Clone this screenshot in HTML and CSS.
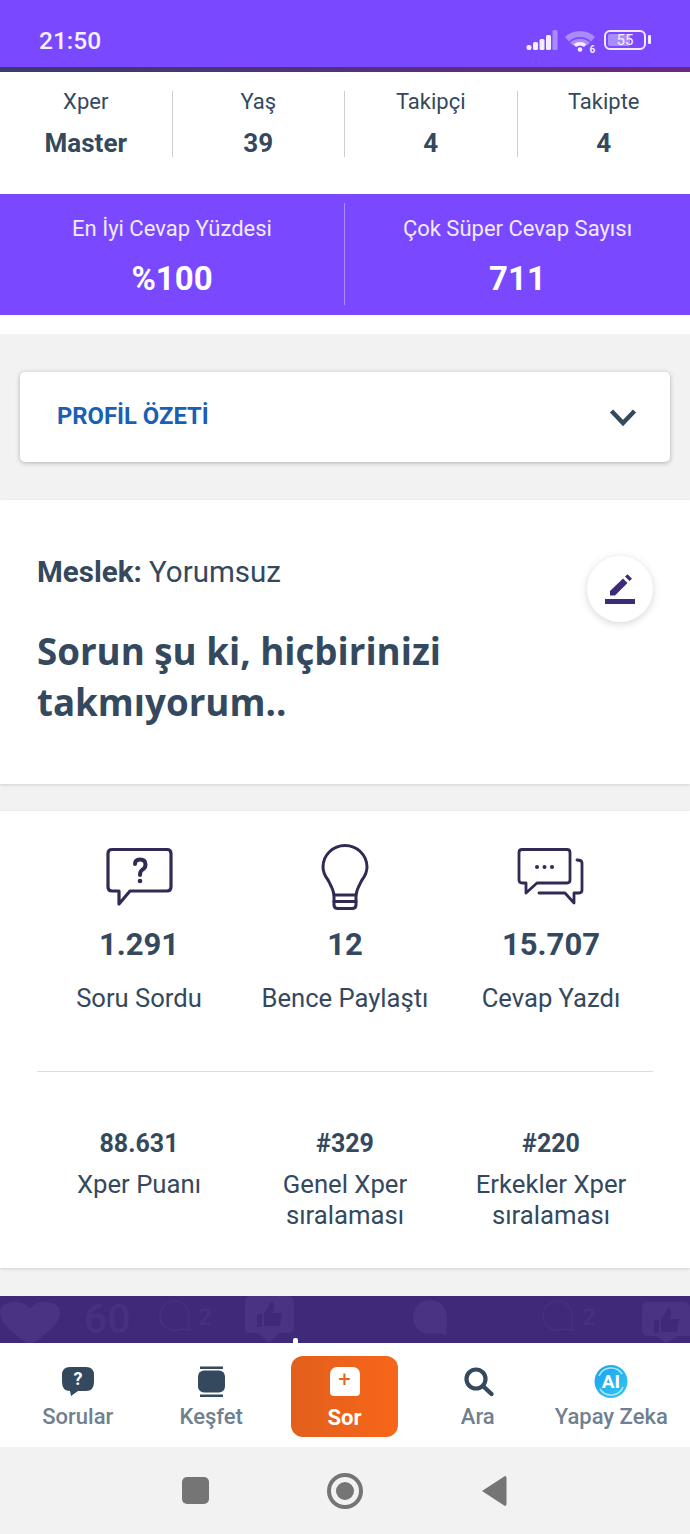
FILE: index.html
```html
<!DOCTYPE html>
<html lang="en">
<head>
    <meta charset="UTF-8">
    <meta name="viewport" content="width=device-width, initial-scale=1.0">
    <title>Profil</title>
    <link rel="stylesheet" href="styles.css">
</head>
<body>
    <div class="status-bar">
        <span class="clock">21:50</span>
        <div class="status-icons">
            <svg class="signal" width="32" height="20" viewBox="0 0 32 20">
                <g fill="#f3edff">
                    <rect x="0.500" y="15" width="5" height="5" rx="2"/>
                    <rect x="7" y="12" width="5" height="8" rx="1.500"/>
                    <rect x="13.500" y="9" width="5" height="11" rx="1.500"/>
                    <rect x="20" y="5" width="5" height="15" rx="1.500"/>
                </g>
                <rect x="26.500" y="0" width="5" height="20" rx="1.500" fill="#a98bff"/>
            </svg>
            <svg class="wifi" width="34" height="32" viewBox="0 0 34 32">
                <path d="M0 7 A22 22 0 0 1 30 7 L26 11.500 A16 16 0 0 0 4 11.500 Z" fill="#a98bff"/>
                <path d="M5 12.500 A15 15 0 0 1 25 12.500 L22 15.500 A10.500 10.500 0 0 0 8 15.500 Z" fill="#a98bff"/>
                <path d="M8.500 14.500 A10 10 0 0 1 21.500 14.500 L19 17 A6.500 6.500 0 0 0 11 17 Z" fill="#f3edff"/>
                <circle cx="15" cy="19.500" r="2.300" fill="#f3edff"/>
                <text x="24.500" y="22.500" class="wifi-num">6</text>
            </svg>
            <div class="battery">
                <span class="battery-fill"></span>
                <span class="battery-num">55</span>
            </div>
        </div>
    </div>
    <div class="status-line"></div>

    <div class="top-stats">
        <div class="top-stat"><span class="top-label">Xper</span><b class="top-value">Master</b></div>
        <div class="top-stat"><span class="top-label">Yaş</span><b class="top-value">39</b></div>
        <div class="top-stat"><span class="top-label">Takipçi</span><b class="top-value">4</b></div>
        <div class="top-stat"><span class="top-label">Takipte</span><b class="top-value">4</b></div>
    </div>

    <div class="purple-stats">
        <div class="purple-stat"><span class="purple-label">En İyi Cevap Yüzdesi</span><b class="purple-value">%100</b></div>
        <div class="purple-stat"><span class="purple-label">Çok Süper Cevap Sayısı</span><b class="purple-value">711</b></div>
    </div>
    <div class="white-gap"></div>

    <div class="summary-wrap">
        <div class="summary-card">
            <span class="summary-title">PROFİL ÖZETİ</span>
            <svg width="30" height="20" viewBox="0 0 30 20"><path d="M3.500 3 L15 15 L26.500 3" fill="none" stroke="#34495e" stroke-width="4.400"/></svg>
        </div>
    </div>

    <section class="bio">
        <div class="bio-line"><b>Meslek:</b> Yorumsuz</div>
        <h2 class="bio-quote">Sorun şu ki, hiçbirinizi takmıyorum..</h2>
        <div class="edit-btn">
            <svg width="32" height="32" viewBox="0 0 32 32">
                <rect x="1" y="26" width="30" height="5" fill="#3f2a7a"/>
                <path d="M6 22.500 V18 L19 5.500 L23.500 10 L11 22.500 Z" fill="#3f2a7a"/>
                <path d="M21 3.500 L23.500 1.200 L28 5.800 L25.500 8 Z" fill="#3f2a7a"/>
            </svg>
        </div>
    </section>

    <section class="stats">
        <div class="stats-row">
            <div class="stat">
                <svg class="stat-icon" width="68" height="68" viewBox="0 0 68 68" fill="none" stroke="#2f2b55" stroke-width="3.200" stroke-linejoin="round" stroke-linecap="round">
                    <path d="M7 5.500 H62 Q66 5.500 66 9.500 V43 Q66 47 62 47 H25 L14 60 V47 H7 Q3 47 3 43 V9.500 Q3 5.500 7 5.500 Z"/>
                    <path d="M30 20 Q30 15.500 35 15.500 Q40.500 15.500 40.500 20.500 Q40.500 24 37 26 Q35 27.500 35 31" stroke-width="4"/>
                    <circle cx="35" cy="37" r="2.300" fill="#2f2b55" stroke="none"/>
                </svg>
                <b class="stat-value">1.291</b>
                <span class="stat-label">Soru Sordu</span>
            </div>
            <div class="stat">
                <svg class="stat-icon" width="68" height="68" viewBox="0 0 68 68" fill="none" stroke="#2f2b55" stroke-width="3" stroke-linejoin="round" stroke-linecap="round">
                    <path d="M23 51 C22 44 19 40 17 36 C14 32 12 29 12 23 C12 11 22 1.500 34 1.500 C46 1.500 56 11 56 23 C56 29 54 32 51 36 C49 40 46 44 45 51"/>
                    <path d="M23 51 H45 V61 Q45 64.500 41 64.500 H27 Q23 64.500 23 61 Z"/>
                    <path d="M23 57.500 H45"/>
                </svg>
                <b class="stat-value">12</b>
                <span class="stat-label">Bence Paylaştı</span>
            </div>
            <div class="stat">
                <svg class="stat-icon" width="68" height="68" viewBox="0 0 68 68" fill="none" stroke="#2f2b55" stroke-width="2.800" stroke-linejoin="round" stroke-linecap="round">
                    <path d="M5 5.500 H50 Q53 5.500 53 8.500 V36 Q53 39 50 39 H20 L9 49 V39 H5 Q2 39 2 36 V8.500 Q2 5.500 5 5.500 Z"/>
                    <path d="M60 16 Q65 16 65 19 V46 Q65 49 62 49 H57 V59 L48 49 H22"/>
                    <g fill="#2f2b55" stroke="none"><circle cx="20" cy="23" r="2"/><circle cx="27.500" cy="23" r="2"/><circle cx="35" cy="23" r="2"/></g>
                </svg>
                <b class="stat-value">15.707</b>
                <span class="stat-label">Cevap Yazdı</span>
            </div>
        </div>
        <hr class="stats-divider">
        <div class="ranks-row">
            <div class="rank"><b class="rank-value">88.631</b><span class="rank-label">Xper Puanı</span></div>
            <div class="rank"><b class="rank-value">#329</b><span class="rank-label">Genel Xper sıralaması</span></div>
            <div class="rank"><b class="rank-value">#220</b><span class="rank-label">Erkekler Xper sıralaması</span></div>
        </div>
    </section>

    <div class="banner">
        <svg width="690" height="47" viewBox="0 0 690 47">
            <g fill="#4a3382">
                <path d="M30 50 C12 36 0 27 0 17 C0 8 8 6 16 6 C23 6 28 9 30 13 C32 9 37 6 44 6 C52 6 60 8 60 17 C60 27 48 36 30 50 Z"/>
                <path d="M250 0 H288 Q294 0 294 6 V32 Q294 37 288 37 H279 L269 47 L259 37 H250 Q245 37 245 32 V6 Q245 0 250 0 Z"/>
                <path d="M430 4 C441 4 447 13 447 22 C447 29 446 33 447 39 L436 37 C423 40 413 33 413 22 C413 13 419 4 430 4 Z"/>
                <path d="M648 6 H684 Q690 6 690 12 V40 H678 L666 47 L656 40 H648 Q642 40 642 34 V12 Q642 6 648 6 Z"/>
            </g>
            <g fill="#3f2a7a">
                <path d="M257 18 H262 V31 H257 Z M264 18 L271 6 Q275 6 274 12 L273 17 H282 L280 30 H264 Z"/>
                <path d="M654 24 H659 V37 H654 Z M661 24 L668 12 Q672 12 671 18 L670 23 H679 L677 36 H661 Z"/>
            </g>
            <g fill="none" stroke="#463080" stroke-width="1.500">
                <path d="M175 5 C183 5 189 12 189 20 C189 25 188 29 190 34 L182 33 C170 37 160 30 160 20 C160 12 167 5 175 5 Z"/>
                <path d="M558 5 C566 5 572 12 572 20 C572 25 571 29 573 34 L565 33 C553 37 543 30 543 20 C543 12 550 5 558 5 Z"/>
            </g>
            <text x="84" y="37" class="banner-big">60</text>
            <text x="198" y="29" class="banner-small">2</text>
            <text x="582" y="29" class="banner-small">2</text>
        </svg>
        <span class="banner-dot"></span>
    </div>

    <nav class="tabbar">
        <div class="tab">
            <svg class="tab-icon" width="34" height="32" viewBox="0 0 34 32">
                <path d="M9 1 H25 Q33 1 33 9 V16 Q33 25 25 25 H17 L10 30 L9 25 Q1 25 1 16 V9 Q1 1 9 1 Z" fill="#34495e"/>
                <text x="17" y="19" class="tab-q">?</text>
            </svg>
            <span>Sorular</span>
        </div>
        <div class="tab">
            <svg class="tab-icon" width="34" height="32" viewBox="0 0 34 32" fill="#34495e">
                <rect x="6" y="0.500" width="23" height="2.500"/>
                <rect x="4" y="4.500" width="27" height="22" rx="6"/>
                <rect x="6" y="28.500" width="23" height="2.500"/>
            </svg>
            <span>Keşfet</span>
        </div>
        <div class="tab tab-ask">
            <span class="ask-icon">+</span>
            <span>Sor</span>
        </div>
        <div class="tab">
            <svg class="tab-icon" width="34" height="32" viewBox="0 0 34 32" fill="none" stroke="#34495e">
                <circle cx="15" cy="13" r="9.500" stroke-width="4.200"/>
                <path d="M23 21 L30.500 28" stroke-width="4.400" stroke-linecap="round"/>
            </svg>
            <span>Ara</span>
        </div>
        <div class="tab">
            <svg class="tab-icon" width="34" height="33" viewBox="0 0 34 33">
                <defs>
                    <linearGradient id="aiGrad" x1="0" y1="0" x2="1" y2="1">
                        <stop offset="0" stop-color="#1a9ff0"/>
                        <stop offset="1" stop-color="#35c8ee"/>
                    </linearGradient>
                </defs>
                <circle cx="17" cy="16.500" r="16.500" fill="url(#aiGrad)"/>
                <path d="M5 11 A13 13 0 0 1 28 9 M29 22 A13 13 0 0 1 6 24" fill="none" stroke="#a8e6fa" stroke-width="1.600"/>
                <text x="17" y="23" class="ai-text">AI</text>
            </svg>
            <span>Yapay Zeka</span>
        </div>
    </nav>

    <div class="android-nav">
        <span class="nav-square"></span>
        <span class="nav-circle"></span>
        <svg width="26" height="32" viewBox="0 0 26 32"><path d="M1 16 L24 1 Q25.500 1 25.500 3 V29 Q25.500 31 24 31 Z" fill="#757575"/></svg>
    </div>
</body>
</html>
```

FILE: styles.css
```css
* {
    box-sizing: border-box;
}
body {
    width: 690px;
    height: 1534px;
    margin: 0;
    overflow: hidden;
    font-family: Roboto, sans-serif;
    color: #34495e;
    background-color: #f2f2f2;
}
b {
    font-weight: 700;
}

/* status bar */
.status-bar {
    height: 67px;
    padding: 26px 39px;
    display: flex;
    justify-content: space-between;
    background-color: #7a49ff;
}
.clock {
    font-size: 24.500px;
    line-height: 30px;
    color: #f5f0ff;
    font-weight: 500;
}
.status-icons {
    width: 126px;
    margin-right: -2px;
    display: flex;
    align-items: flex-start;
    gap: 7px;
}
.signal {
    flex: none;
    margin-top: 4px;
    margin-left: -1px;
}
.wifi {
    flex: none;
    margin-top: 4px;
    margin-right: -2px;
}
.wifi-num {
    font-family: Roboto, sans-serif;
    font-size: 10px;
    font-weight: 700;
    fill: #f3edff;
}
.battery {
    position: relative;
    flex: none;
    width: 42px;
    height: 20px;
    margin-top: 4px;
    padding: 2px;
    border: 2px solid #f0eaff;
    border-radius: 6px;
}
.battery::after {
    content: "";
    position: absolute;
    right: -7px;
    top: 3px;
    width: 3px;
    height: 9px;
    background-color: #f0eaff;
    border-radius: 1px;
}
.battery-fill {
    display: block;
    width: 22px;
    height: 12px;
    background-color: #a98bff;
    border-radius: 2px;
}
.battery-num {
    position: absolute;
    left: 0;
    right: 0;
    top: 0;
    text-align: center;
    font-size: 15px;
    line-height: 16px;
    color: #f5f0ff;
}
.status-line {
    height: 5px;
    background: linear-gradient(to right, #3b3a6e, #6a2a80);
}

/* top stats */
.top-stats {
    height: 122px;
    padding-top: 19px;
    display: grid;
    grid-template-columns: repeat(4, 1fr);
    align-items: start;
    background-color: #ffffff;
}
.top-stat {
    height: 66px;
    display: flex;
    flex-direction: column;
    align-items: center;
    border-right: 1px solid #cfcfcf;
}
.top-stat:last-child {
    border-right: none;
}
.top-label {
    font-size: 22px;
    line-height: 22px;
}
.top-value {
    font-size: 26px;
    line-height: 30px;
    margin-top: 15px;
}

.purple-stats {
    height: 121px;
    padding-top: 9px;
    display: grid;
    grid-template-columns: 1fr 1fr;
    background-color: #7a49ff;
}
.purple-stat {
    height: 102px;
    display: flex;
    flex-direction: column;
    align-items: center;
    color: #ffffff;
    border-right: 1px solid #a98bff;
}
.purple-stat:last-child {
    border-right: none;
}
.purple-label {
    font-size: 22px;
    line-height: 24px;
    margin-top: 14px;
    color: #f0eaff;
}
.purple-value {
    font-size: 33px;
    line-height: 38px;
    margin-top: 19px;
}
.white-gap {
    height: 19px;
    background-color: #ffffff;
}

/* profile summary */
.summary-wrap {
    height: 166px;
    padding: 38px 20px 0 20px;
}
.summary-card {
    height: 90px;
    padding: 0 32px 0 37px;
    display: flex;
    align-items: center;
    justify-content: space-between;
    background-color: #ffffff;
    border-radius: 5px;
    box-shadow: 0 1px 5px rgba(0,0,0,0.28);
}
.summary-title {
    font-size: 23.800px;
    font-weight: 700;
    color: #1a5fb4;
    margin-top: -2px;
}
.summary-card svg {
    margin-top: 2px;
}

/* bio */
.bio {
    position: relative;
    height: 284px;
    padding: 54px 37px 0 37px;
    background-color: #ffffff;
    box-shadow: 0 1px 3px rgba(0,0,0,0.14);
}
.bio-line {
    font-size: 29.500px;
    line-height: 36px;
}
.bio-quote {
    width: 500px;
    margin: 36px 0 0 0;
    font-family: "Open Sans", sans-serif;
    font-size: 36.700px;
    line-height: 51px;
    font-weight: 700;
}
.edit-btn {
    position: absolute;
    right: 37px;
    top: 56px;
    width: 66px;
    height: 66px;
    display: flex;
    align-items: center;
    justify-content: center;
    background-color: #ffffff;
    border-radius: 50%;
    box-shadow: 0 2px 8px rgba(0,0,0,0.16);
}

/* stats */
.stats {
    height: 457px;
    margin-top: 27px;
    padding: 0 37px;
    background-color: #ffffff;
    box-shadow: 0 1px 3px rgba(0,0,0,0.14);
}
.stats-row,
.ranks-row {
    display: grid;
    grid-template-columns: repeat(3, 1fr);
    margin: 0 -1px;
}
.stats-row {
    height: 260px;
    padding-top: 33px;
    align-items: start;
}
.stat,
.rank {
    display: flex;
    flex-direction: column;
    align-items: center;
    text-align: center;
}
.stat-icon {
    display: block;
}
.stat-value {
    font-size: 31px;
    line-height: 36px;
    margin-top: 15px;
}
.stat-label {
    font-size: 25.600px;
    line-height: 30px;
    margin-top: 20px;
    white-space: nowrap;
}
.stats-divider {
    margin: 0;
    border: none;
    border-top: 1px solid #dcdcdc;
}
.ranks-row {
    padding-top: 57px;
}
.rank-value {
    font-size: 25px;
    line-height: 30px;
}
.rank-label {
    width: 170px;
    font-size: 25.700px;
    line-height: 31px;
    margin-top: 10px;
}

/* banner */
.banner {
    position: relative;
    height: 47px;
    margin-top: 28px;
    overflow: hidden;
    background-color: #3f2a7a;
}
.banner svg {
    display: block;
}
.banner-big {
    font-family: Roboto, sans-serif;
    font-size: 41px;
    font-weight: 500;
    fill: #463080;
}
.banner-small {
    font-family: Roboto, sans-serif;
    font-size: 24px;
    font-weight: 700;
    fill: #463080;
}
.banner-dot {
    position: absolute;
    left: 293px;
    bottom: 0;
    width: 5px;
    height: 5px;
    background-color: #ffffff;
    border-radius: 2px 2px 0 0;
}

/* bottom tabs */
.tabbar {
    height: 104px;
    padding: 13px 0 10px 11px;
    display: flex;
    background-color: #ffffff;
}
.tab {
    width: 133.500px;
    display: flex;
    flex-direction: column;
    align-items: center;
    justify-content: flex-end;
    font-size: 22px;
    line-height: 26px;
    font-weight: 500;
    color: #708090;
    white-space: nowrap;
    padding-bottom: 7px;
}
.tab-icon {
    display: block;
    margin-bottom: 6px;
}
.tab-q {
    font-family: Roboto, sans-serif;
    font-size: 18px;
    font-weight: 700;
    fill: #ffffff;
    text-anchor: middle;
}
.ai-text {
    font-family: Roboto, sans-serif;
    font-size: 19px;
    font-weight: 700;
    fill: #ffffff;
    text-anchor: middle;
}
.tab-ask {
    width: 107px;
    margin: 0 13px;
    padding-bottom: 6px;
    color: #ffffff;
    font-weight: 700;
    border-radius: 12px;
    background: linear-gradient(to right, #e25f1c, #f7661a);
}
.ask-icon {
    width: 30px;
    height: 29px;
    margin-bottom: 9px;
    padding-bottom: 3px;
    display: flex;
    align-items: center;
    justify-content: center;
    font-size: 22px;
    line-height: 22px;
    font-weight: 400;
    color: #e8641c;
    background-color: #ffffff;
    border-radius: 7px 7px 4px 4px;
}

/* android nav */
.android-nav {
    height: 87px;
    padding: 0 183px 0 182px;
    display: flex;
    align-items: center;
    justify-content: space-between;
    background-color: #f2f2f2;
}
.nav-square {
    width: 27px;
    height: 27px;
    background-color: #757575;
    border-radius: 5px;
}
.nav-circle {
    width: 36px;
    height: 36px;
    background-color: #757575;
    border: 9px solid #f2f2f2;
    border-radius: 50%;
    outline: 4px solid #757575;
    outline-offset: -4px;
}
```
